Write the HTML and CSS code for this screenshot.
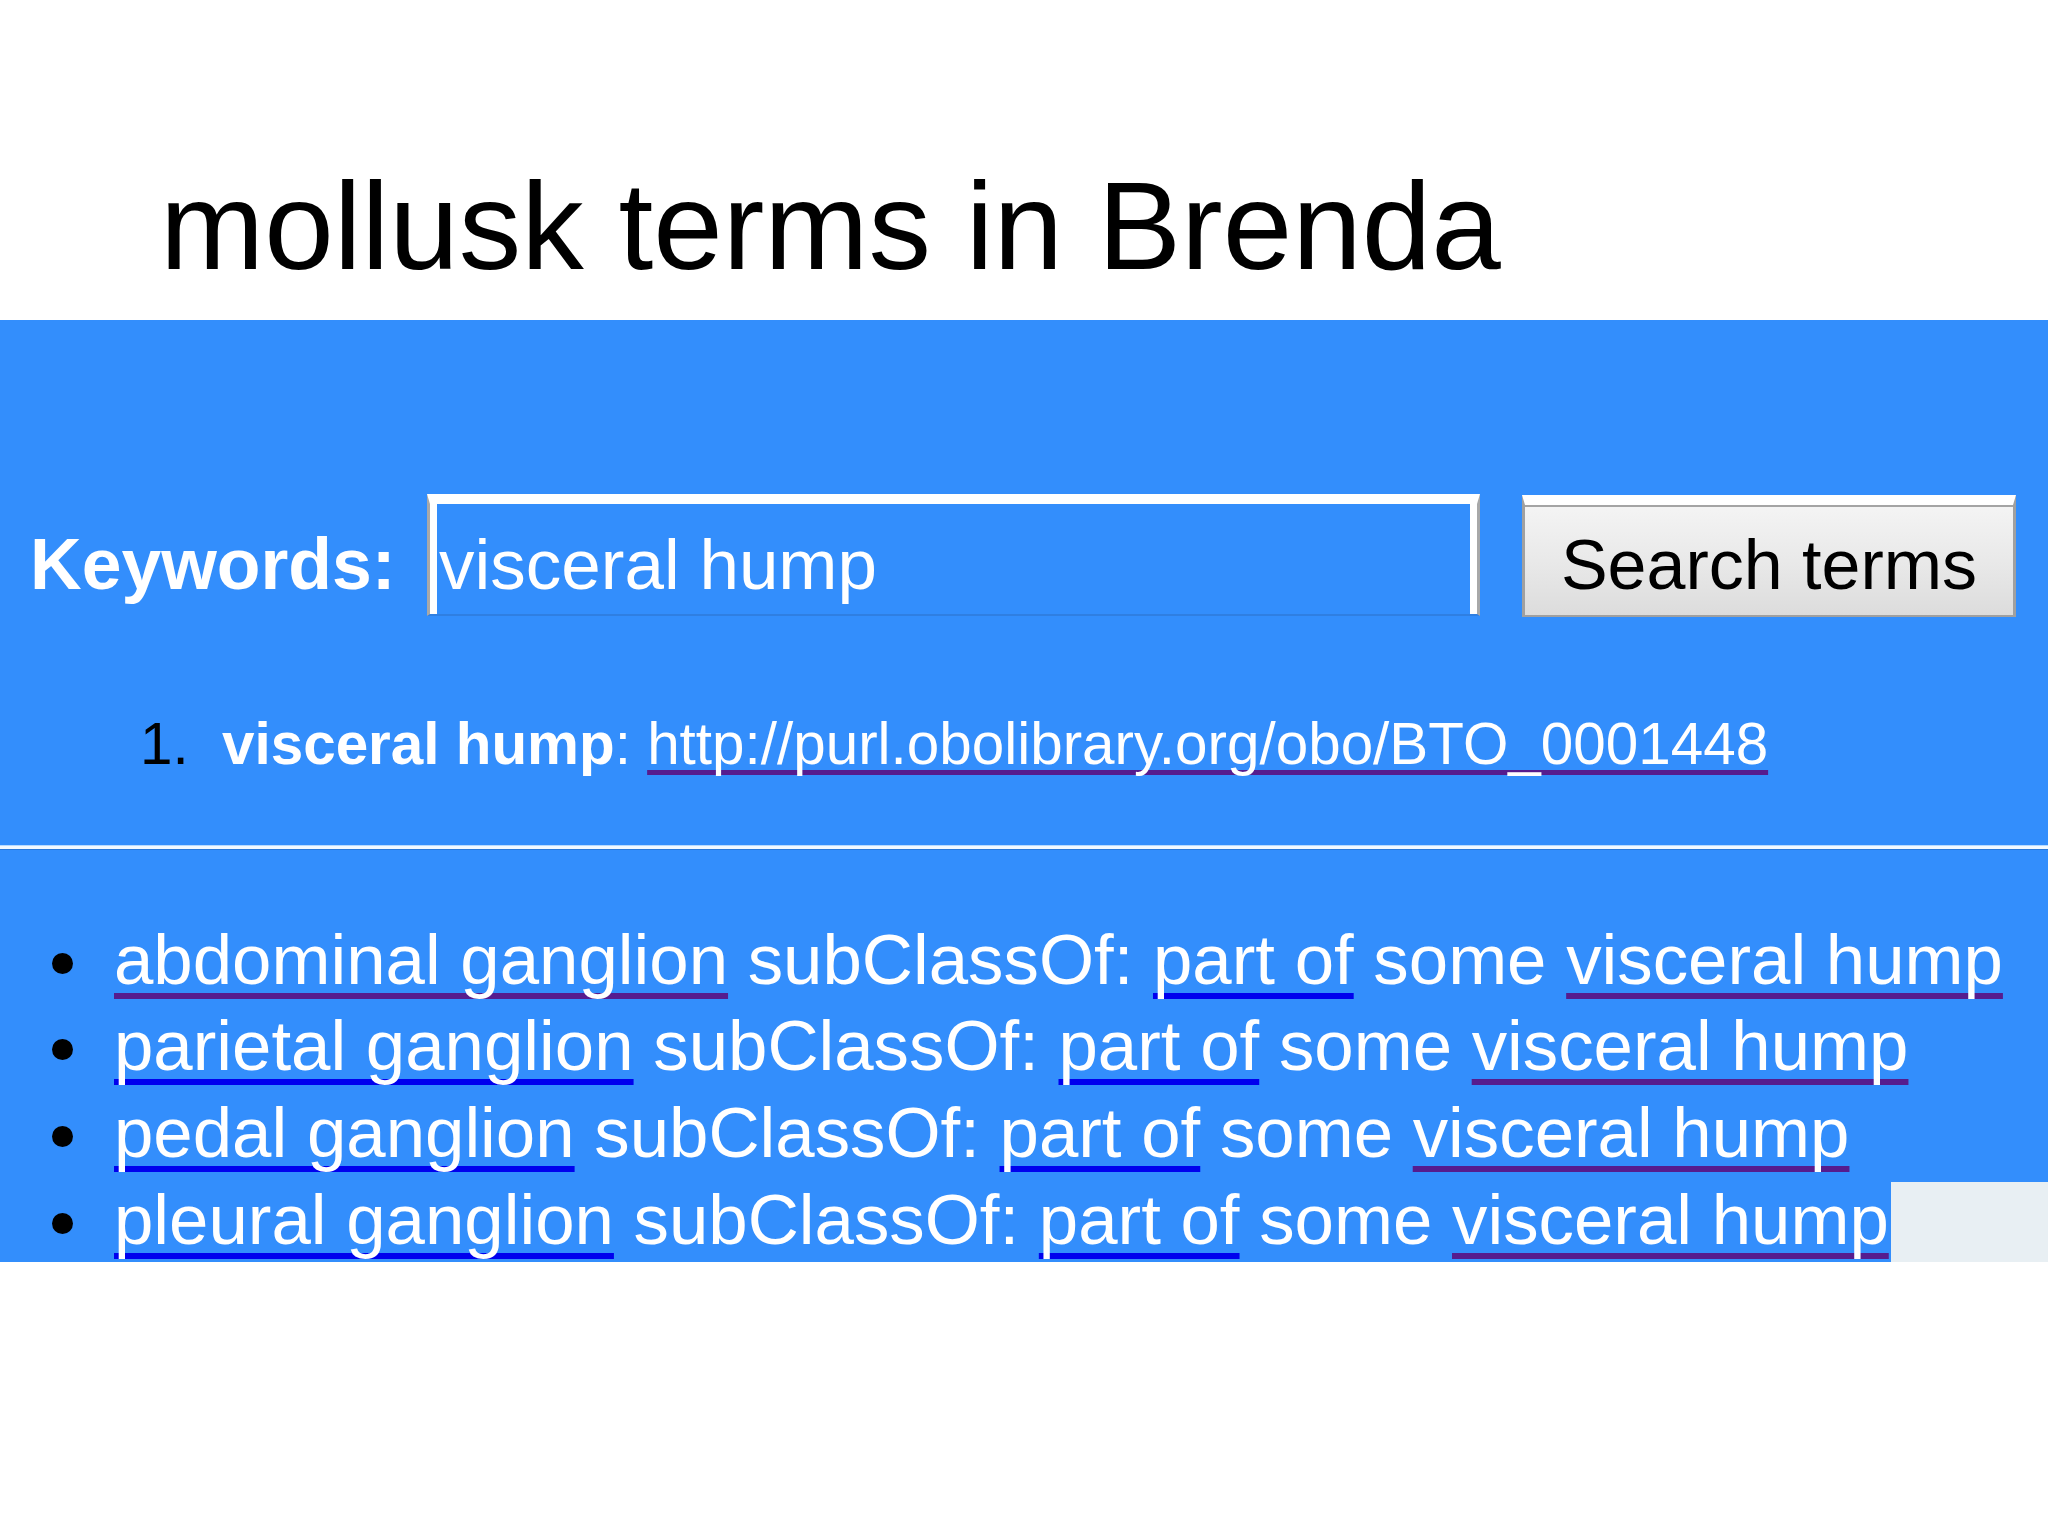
FILE: index.html
```html
<!DOCTYPE html>
<html lang="en">
<head>
<meta charset="utf-8">
<title>mollusk terms in Brenda</title>
<link rel="stylesheet" href="styles.css">
</head>
<body>
<header class="slide-head">
  <h1 class="title">mollusk terms in Brenda</h1>
</header>
<section class="panel">
  <form class="search-row" onsubmit="return false">
    <label class="kw-label" for="kw">Keywords:</label>
    <input class="kw-input" id="kw" type="text" value="visceral hump">
    <button class="kw-button" type="button">Search terms</button>
  </form>
  <ol class="results">
    <li><b>visceral hump</b>: <a class="lnk visited" href="#">http://purl.obolibrary.org/obo/BTO_0001448</a></li>
  </ol>
  <div class="rule"></div>
  <ul class="axioms">
    <li><a class="lnk visited" href="#">abdominal ganglion</a> subClassOf: <a class="lnk" href="#">part of</a> some <a class="lnk visited" href="#">visceral hump</a></li>
    <li><a class="lnk" href="#">parietal ganglion</a> subClassOf: <a class="lnk" href="#">part of</a> some <a class="lnk visited" href="#">visceral hump</a></li>
    <li><a class="lnk" href="#">pedal ganglion</a> subClassOf: <a class="lnk" href="#">part of</a> some <a class="lnk visited" href="#">visceral hump</a></li>
    <li><a class="lnk" href="#">pleural ganglion</a> subClassOf: <a class="lnk" href="#">part of</a> some <a class="lnk visited" href="#">visceral hump</a></li>
  </ul>
  <div class="corner"></div>
</section>
</body>
</html>
```

FILE: styles.css
```css
html, body {
  margin: 0;
  padding: 0;
  background: #fff;
}
body {
  font-family: "Liberation Sans", Arial, sans-serif;
  width: 2048px;
  height: 1536px;
  overflow: hidden;
}
.slide-head {
  box-sizing: border-box;
  height: 320px;
  padding: 163px 0 0 160px;
}
.title {
  margin: 0;
  font-size: 125px;
  line-height: 125px;
  font-weight: normal;
  color: #000;
  white-space: nowrap;
}
.panel {
  position: relative;
  height: 942px;
  overflow: hidden;
  background: #338efc;
  color: #fff;
}
.search-row {
  display: flex;
  align-items: baseline;
  margin: 0;
  padding: 174px 0 0 30px;
}
.kw-label {
  flex: none;
  width: 397px;
  font-size: 71.5px;
  font-weight: bold;
  white-space: nowrap;
}
.kw-input {
  flex: none;
  box-sizing: border-box;
  width: 1053px;
  height: 122px;
  margin: 0;
  padding: 11px 0 0 9px;
  border-style: solid;
  border-width: 10px 3px 2px 3px;
  border-color: #fff #a8a8a8 #2f7fe2 #a8a8a8;
  box-shadow: inset 7px 0 0 #fff, inset -7px 0 0 #fff;
  background: transparent;
  color: #fff;
  font-family: "Liberation Sans", Arial, sans-serif;
  font-size: 71px;
  outline: none;
}
.kw-button {
  flex: none;
  box-sizing: border-box;
  width: 494px;
  height: 122px;
  margin: 0 0 0 42px;
  padding: 11px 0 0 0;
  border-style: solid;
  border-width: 10px 3px 2px 3px;
  border-color: #fff #a0a0a0 #a0a0a0 #a0a0a0;
  box-shadow: inset 0 2px 0 #a4a4a4;
  background: linear-gradient(#f4f4f4, #e8e8e8 55%, #dcdcdc);
  color: #000;
  font-family: "Liberation Sans", Arial, sans-serif;
  font-size: 70px;
  white-space: nowrap;
}
.results {
  list-style: none;
  margin: 93px 0 0 0;
  padding: 0 0 0 140px;
  counter-reset: item;
  font-size: 58.4px;
  white-space: nowrap;
}
.results li::before {
  counter-increment: item;
  content: counter(item) ".";
  display: inline-block;
  width: 82px;
  color: #000;
  font-weight: normal;
}
.results .lnk {
  text-decoration-thickness: 5px;
  text-underline-offset: 6px;
}
.rule {
  margin-top: 68px;
  height: 3px;
  background: #f2f9ff;
  border-top: 1px solid #b6daff;
  border-bottom: 1px solid #2a78d8;
}
.axioms {
  list-style: none;
  margin: 67px 0 0 0;
  padding: 0;
  font-size: 70.8px;
  line-height: 86.7px;
  white-space: nowrap;
}
.axioms li::before {
  content: "";
  display: inline-block;
  width: 21px;
  height: 21px;
  border-radius: 50%;
  background: #000;
  margin: 0 41px 0 52px;
  vertical-align: 10px;
}
.lnk {
  color: #fff;
  text-decoration-line: underline;
  text-decoration-color: #0000ee;
  text-decoration-thickness: 6px;
  text-underline-offset: 9px;
  text-decoration-skip-ink: none;
}
.lnk.visited {
  text-decoration-color: #561c8e;
}
.corner {
  position: absolute;
  right: 0;
  bottom: 0;
  width: 157px;
  height: 80px;
  background: #e8eff3;
}
```
